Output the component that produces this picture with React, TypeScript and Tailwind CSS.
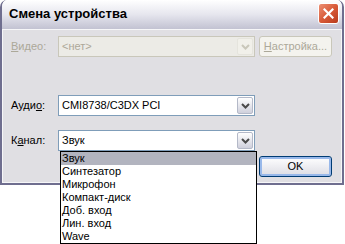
import React from "react"

const font = { fontFamily: '"Liberation Sans", Arial, sans-serif' }

function Chevron({ color }: { color: string }) {
  return (
    <svg width="9" height="6" viewBox="0 0 9 6">
      <path d="M1 1 L4.5 4.5 L8 1" fill="none" stroke={color} strokeWidth="2" />
    </svg>
  )
}

function Combo({ value, disabled }: { value: string; disabled?: boolean }) {
  return (
    <div
      className={
        "flex h-[21px] w-[197px] items-stretch border p-[1px] " +
        (disabled ? "border-[#c9c7ba] bg-[#ecebe6]" : "border-[#7f9db9] bg-white")
      }
    >
      <div
        className={
          "flex flex-1 items-center pl-[2px] text-[11px] " +
          (disabled ? "text-[#aca899]" : "text-black")
        }
      >
        {value}
      </div>
      <div
        className={
          "flex w-[16px] items-center justify-center rounded-[2px] border " +
          (disabled
            ? "border-[#e5e4dd] bg-[#f1f0ea]"
            : "border-[#b4b9c8] bg-gradient-to-b from-[#ffffff] to-[#cfd0dc]")
        }
      >
        <Chevron color={disabled ? "#c9c7ba" : "#4a4a4a"} />
      </div>
    </div>
  )
}

export default function App() {
  const items = ["Звук", "Синтезатор", "Микрофон", "Компакт-диск", "Доб. вход", "Лин. вход", "Wave"]

  return (
    <div className="relative h-[244px] w-[345px] bg-white" style={font}>
      <div className="flex h-[185px] w-[344px] flex-col overflow-hidden rounded-t-[7px] border-2 border-t-0 border-[#6f6e8f]">
        {/* title bar */}
        <div className="flex h-[29px] items-center justify-between bg-gradient-to-b from-[#ffffff] via-[#e6e6ee] to-[#c2c2d2] pb-[2px] pl-[7px] pr-[3px]">
          <span className="text-[13px] font-bold text-black">Смена устройства</span>
          <div className="flex h-[21px] w-[21px] items-center justify-center rounded-[3px] border border-white bg-gradient-to-br from-[#ec8f73] via-[#d85a38] to-[#b83a1c]">
            <svg width="11" height="11" viewBox="0 0 11 11">
              <path d="M1.5 1.5 L9.5 9.5 M9.5 1.5 L1.5 9.5" stroke="white" strokeWidth="2.2" strokeLinecap="square" />
            </svg>
          </div>
        </div>

        {/* body */}
        <div className="flex flex-1 flex-col border border-[#f6f6f8] bg-[#e0dfe3] pl-[7px] text-[11px]">
          <div className="mt-[6px] flex items-center">
            <span className="w-[48px] pl-[1px] text-[#aca899]">
              <span className="underline">В</span>идео:
            </span>
            <Combo value="<нет>" disabled />
            <div className="ml-[4px] flex h-[21px] w-[73px] items-center justify-center rounded-[3px] border border-[#c9c7ba] bg-[#f4f3ee] text-[#aca899]">
              <span>
                <span className="underline">Н</span>астройка...
              </span>
            </div>
          </div>

          <div className="mt-[38px] flex items-center">
            <span className="w-[48px] pl-[1px] text-black">
              Ауди<span className="underline">о</span>:
            </span>
            <Combo value="CMI8738/C3DX PCI" />
          </div>

          <div className="mt-[14px] flex items-center">
            <span className="w-[48px] pl-[1px] text-black">
              К<span className="underline">а</span>нал:
            </span>
            <Combo value="Звук" />
          </div>

          <div className="mt-[5px] flex">
            <div className="ml-[249px] flex h-[21px] w-[73px] items-center justify-center rounded-[3px] border border-[#003c74] bg-gradient-to-b from-[#ffffff] to-[#dcdce4] text-black shadow-[inset_0_0_0_2px_#98b8ea]">
              OK
            </div>
          </div>
        </div>
      </div>

      {/* dropdown list */}
      <div className="absolute left-[60px] top-[151px] w-[197px] border border-black bg-white text-[11px] text-black">
        {items.map((it, i) => (
          <div key={it} className={"h-[13px] pl-[1px] leading-[13px] " + (i === 0 ? "bg-[#b2b4bf]" : "")}>
            {it}
          </div>
        ))}
      </div>
    </div>
  )
}
